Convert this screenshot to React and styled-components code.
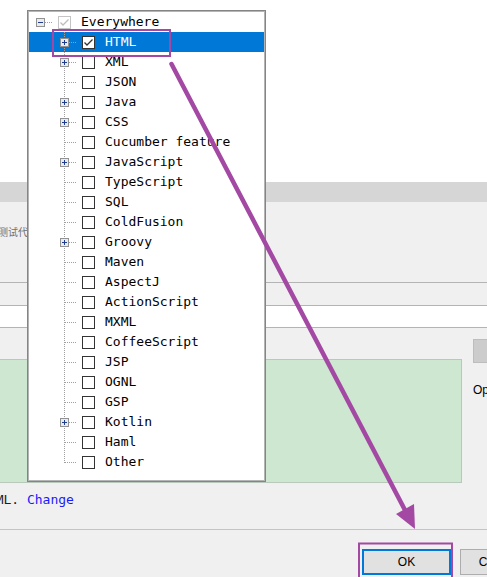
import React from "react";
import styled, { createGlobalStyle } from "styled-components";

const languages = [
  { name: "HTML", expander: true, selected: true, checked: true },
  { name: "XML", expander: true },
  { name: "JSON" },
  { name: "Java", expander: true },
  { name: "CSS", expander: true },
  { name: "Cucumber feature" },
  { name: "JavaScript", expander: true },
  { name: "TypeScript" },
  { name: "SQL" },
  { name: "ColdFusion" },
  { name: "Groovy", expander: true },
  { name: "Maven" },
  { name: "AspectJ" },
  { name: "ActionScript" },
  { name: "MXML" },
  { name: "CoffeeScript" },
  { name: "JSP" },
  { name: "OGNL" },
  { name: "GSP" },
  { name: "Kotlin", expander: true },
  { name: "Haml" },
  { name: "Other" },
];

const Connector = ({ expander, vertical }) => (
  <Guide width="23" height="20" viewBox="0 0 23 20">
    {vertical && (
      <line
        x1="10.5"
        y1="0"
        x2="10.5"
        y2={vertical === "last" ? 11 : 20}
        stroke="#a0a0a0"
        strokeDasharray="1 1"
      />
    )}
    <line
      x1={expander ? 15 : 11}
      y1="10.5"
      x2="23"
      y2="10.5"
      stroke="#a0a0a0"
      strokeDasharray="1 1"
    />
    {expander && (
      <>
        <rect x="6.5" y="6.5" width="8" height="8" fill="#ebebeb" stroke="#919191" />
        <line x1="8" y1="10.5" x2="13" y2="10.5" stroke="#1f3d8f" />
        {expander === "plus" && (
          <line x1="10.5" y1="8" x2="10.5" y2="13" stroke="#1f3d8f" />
        )}
      </>
    )}
  </Guide>
);

const Check = ({ checked, disabled }) => (
  <Box $disabled={disabled}>
    {checked && (
      <svg width="11" height="11" viewBox="0 0 11 11">
        <path
          d="M1.5 5.5 L4 8 L9.5 2.5"
          fill="none"
          stroke={disabled ? "#bdbdbd" : "#333"}
          strokeWidth="1.3"
        />
      </svg>
    )}
  </Box>
);

const App = () => {
  return (
    <>
      <GlobalStyle />
      <Page>
        <TopPane />
        <SectionBar />
        <Description>测试代码</Description>
        <FieldStrip />
        <FieldStrip $white $last />
        <MainRow>
          <GreenBox />
          <SideColumn>
            <SideButton />
            <SideText>Options</SideText>
          </SideColumn>
        </MainRow>
        <ChangeLine>
          HTML. <LinkText>Change</LinkText>
        </ChangeLine>
        <Footer>
          <ButtonRow>
            <OkButton>OK</OkButton>
            <PlainButton>Cancel</PlainButton>
          </ButtonRow>
        </Footer>

        <Popup>
          <Row $level={0}>
            <Connector expander="minus" />
            <Check checked disabled />
            <Label>Everywhere</Label>
          </Row>
          {languages.map((l, i) => (
            <Row key={l.name} $level={1} $selected={l.selected}>
              <Connector
                expander={l.expander ? "plus" : null}
                vertical={i === languages.length - 1 ? "last" : "full"}
              />
              <Check checked={l.checked} />
              <Label $selected={l.selected}>{l.name}</Label>
            </Row>
          ))}
        </Popup>

        <Annotations width="487" height="577" viewBox="0 0 487 577">
          <rect x="53" y="30" width="117" height="26" fill="none" stroke="#a349a4" strokeWidth="2" />
          <line
            x1="171.5"
            y1="64"
            x2="406"
            y2="512"
            stroke="#a349a4"
            strokeWidth="4.5"
            strokeLinecap="round"
          />
          <polygon points="415,529 396,514 414,504" fill="#a349a4" />
          <rect x="359" y="543.5" width="93" height="40" fill="none" stroke="#a349a4" strokeWidth="2" />
        </Annotations>
      </Page>
    </>
  );
};

export default App;

const GlobalStyle = createGlobalStyle`
  html, body {
    margin: 0;
    padding: 0;
    background: #f0f0f0;
  }
  body {
    font-family: "Liberation Sans", Arial, sans-serif;
  }
`;

const Page = styled.div`
  position: relative;
  width: 487px;
  height: 577px;
  overflow: hidden;
  background: #f0f0f0;
  display: flex;
  flex-direction: column;
`;

const TopPane = styled.div`
  height: 182px;
  flex-shrink: 0;
  background: #ffffff;
`;

const SectionBar = styled.div`
  height: 20px;
  flex-shrink: 0;
  background: #d6d6d6;
`;

const Description = styled.div`
  height: 80px;
  flex-shrink: 0;
  box-sizing: border-box;
  padding-top: 23px;
  margin-left: -2px;
  font-family: "Noto Sans CJK SC", sans-serif;
  font-size: 10px;
  line-height: 14px;
  color: #707070;
`;

const FieldStrip = styled.div`
  height: ${(p) => (p.$white ? 21 : 22)}px;
  flex-shrink: 0;
  border-top: 1px solid #b4b4b4;
  border-bottom: ${(p) => (p.$last ? "1px solid #b4b4b4" : "none")};
  background: ${(p) => (p.$white ? "#ffffff" : "#f0f0f0")};
`;

const MainRow = styled.div`
  display: flex;
  margin-top: 11px;
  height: 144px;
  flex-shrink: 0;
`;

const GreenBox = styled.div`
  width: 463px;
  margin-left: -1px;
  margin-top: 20px;
  height: 124px;
  box-sizing: border-box;
  background: #cde7d0;
  border: 1px solid #b8c8ba;
  flex-shrink: 0;
`;

const SideColumn = styled.div`
  margin-left: 11px;
  display: flex;
  flex-direction: column;
  flex-shrink: 0;
`;

const SideButton = styled.div`
  width: 70px;
  height: 24px;
  box-sizing: border-box;
  background: #cccccc;
  border: 1px solid #bdbdbd;
`;

const SideText = styled.div`
  margin-top: 20px;
  font-size: 12px;
  line-height: 14px;
  color: #000;
`;

const ChangeLine = styled.div`
  margin-top: 9px;
  margin-left: -20px;
  height: 16px;
  font-family: "DejaVu Sans Mono", monospace;
  font-size: 13px;
  line-height: 16px;
  color: #1e1e1e;
  white-space: pre;
  flex-shrink: 0;
`;

const LinkText = styled.span`
  color: #1a1aff;
`;

const Footer = styled.div`
  margin-top: 21px;
  border-top: 1px solid #c4c4c4;
  padding-top: 19px;
  flex-shrink: 0;
`;

const ButtonRow = styled.div`
  display: flex;
  gap: 9px;
  padding-left: 362px;
`;

const BaseButton = styled.div`
  height: 26px;
  box-sizing: border-box;
  background: #e1e1e1;
  display: flex;
  align-items: center;
  justify-content: center;
  font-family: "Liberation Sans", Arial, sans-serif;
  font-size: 12px;
  color: #000;
  flex-shrink: 0;
`;

const OkButton = styled(BaseButton)`
  width: 89px;
  border: 2px solid #0078d7;
`;

const PlainButton = styled(BaseButton)`
  width: 75px;
  border: 1px solid #adadad;
`;

const Popup = styled.div`
  position: absolute;
  left: 27px;
  top: 10px;
  width: 239px;
  height: 472px;
  box-sizing: border-box;
  background: #ffffff;
  border: 1px solid #858585;
  box-shadow: inset 0 0 0 1px #b4b4b4;
  padding: 1px;
  z-index: 2;
`;

const Row = styled.div`
  height: 20px;
  display: flex;
  align-items: center;
  padding-left: ${(p) => 1 + p.$level * 24}px;
  background: ${(p) => (p.$selected ? "#0078d7" : "transparent")};
`;

const Guide = styled.svg`
  display: block;
  flex-shrink: 0;
`;

const Box = styled.span`
  width: 13px;
  height: 13px;
  box-sizing: border-box;
  margin-left: 5px;
  border: 1px solid ${(p) => (p.$disabled ? "#c4c4c4" : "#333333")};
  background: #ffffff;
  display: flex;
  align-items: center;
  justify-content: center;
  flex-shrink: 0;
`;

const Label = styled.span`
  margin-left: 10px;
  font-family: "DejaVu Sans Mono", "Liberation Mono", monospace;
  font-size: 13px;
  line-height: 20px;
  color: ${(p) => (p.$selected ? "#ffffff" : "#000000")};
  white-space: pre;
`;

const Annotations = styled.svg`
  position: absolute;
  left: 0;
  top: 0;
  pointer-events: none;
  z-index: 3;
`;
